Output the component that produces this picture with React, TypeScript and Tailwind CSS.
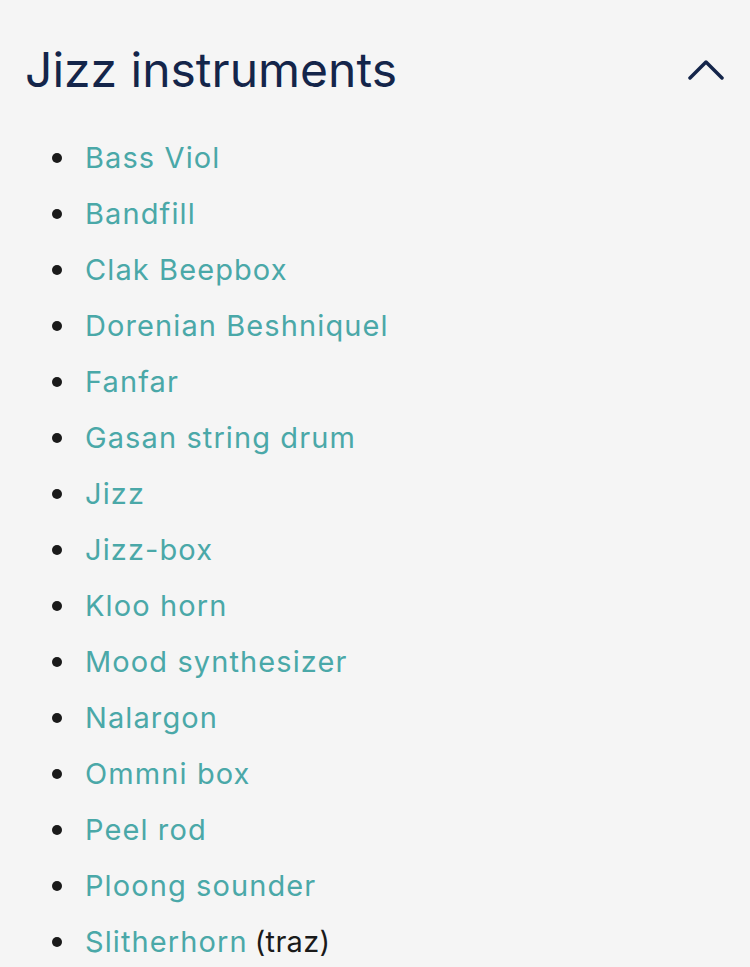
const items = [
  "Bass Viol",
  "Bandfill",
  "Clak Beepbox",
  "Dorenian Beshniquel",
  "Fanfar",
  "Gasan string drum",
  "Jizz",
  "Jizz-box",
  "Kloo horn",
  "Mood synthesizer",
  "Nalargon",
  "Ommni box",
  "Peel rod",
  "Ploong sounder",
];

function Bullet() {
  return <span className="ml-[27px] mr-[23px] h-[10px] w-[10px] shrink-0 rounded-full bg-[#1a1a1a]" />;
}

export default function App() {
  return (
    <div
      className="min-h-screen bg-[#f5f5f5] pl-[25px] pr-[26px] pt-[40px]"
      style={{ fontFamily: "Inter, 'Noto Sans', sans-serif" }}
    >
      <div className="flex items-center justify-between">
        <h2 className="text-[48px] leading-[60px] text-[#14254a]">Jizz instruments</h2>
        <svg width="36" height="22" viewBox="0 0 36 22" fill="none" className="text-[#14254a]">
          <polyline points="2,19 18,3 34,19" stroke="currentColor" strokeWidth="3.5" strokeLinecap="round" strokeLinejoin="round" />
        </svg>
      </div>
      <ul className="mt-[30px]">
        {items.map((name) => (
          <li key={name} className="flex h-[56px] items-center text-[29px] leading-[56px] tracking-[1.1px]">
            <Bullet />
            <a href="#" className="text-[#4aa8a8]">{name}</a>
          </li>
        ))}
        <li className="flex h-[56px] items-center text-[29px] leading-[56px] tracking-[1.1px]">
          <Bullet />
          <a href="#" className="text-[#4aa8a8]">Slitherhorn</a>
          <span className="ml-[7px] tracking-[0.3px] text-[#1a1a1a]">(traz)</span>
        </li>
      </ul>
    </div>
  );
}
